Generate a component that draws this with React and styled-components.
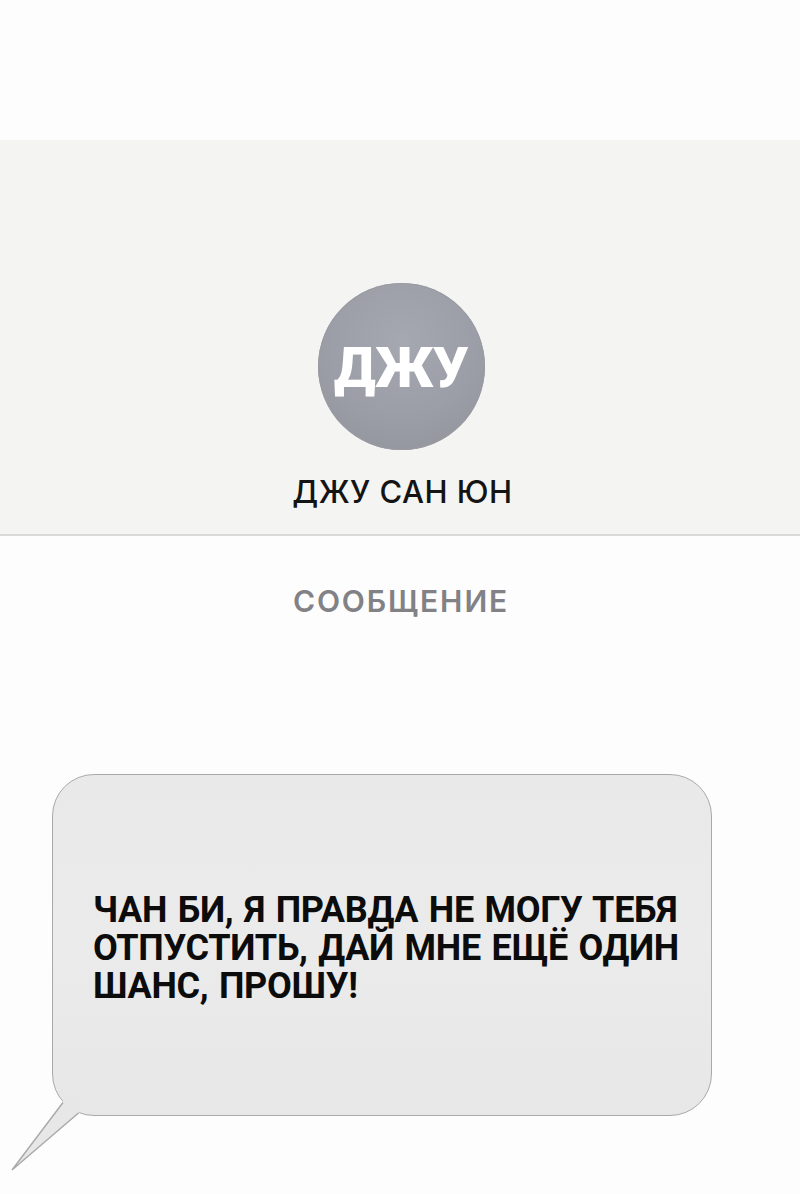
import React from "react";
import styled, { createGlobalStyle } from "styled-components";

const Global = createGlobalStyle`
  html, body { margin: 0; padding: 0; background: #fdfdfd; }
  body { font-family: Inter, "Open Sans", sans-serif; }
`;

const Page = styled.div`
  width: 800px;
  height: 1194px;
  overflow: hidden;
  display: flex;
  flex-direction: column;
  background: #fdfdfd;
`;

const TopSpace = styled.div`
  height: 140px;
`;

const Panel = styled.section`
  height: 396px;
  background: #f4f4f2;
  border-bottom: 2px solid #dadad8;
  display: flex;
  flex-direction: column;
  align-items: center;
  padding-top: 143px;
  box-sizing: border-box;
`;

const Avatar = styled.div`
  width: 167px;
  height: 167px;
  border-radius: 50%;
  background: radial-gradient(circle at 50% 35%, #a6a8b1 0%, #9c9ea7 55%, #90929a 100%);
  box-shadow: 0 0 0 1px #9a9ba2 inset;
  display: flex;
  align-items: center;
  justify-content: center;
  color: #ffffff;
  font-family: Roboto, Inter, sans-serif;
  font-weight: 900;
  font-size: 56px;
  letter-spacing: -0.5px;
  margin-left: 2px;
  padding-top: 2px;
  box-sizing: border-box;
`;

const Name = styled.div`
  margin-top: 23px;
  font-family: Inter, sans-serif;
  font-weight: 500;
  font-size: 31px;
  color: #141414;
  letter-spacing: 0.5px;
  margin-left: 5px;
`;

const Label = styled.div`
  margin-top: 47px;
  align-self: center;
  font-family: Inter, sans-serif;
  font-weight: 600;
  font-size: 30px;
  color: #818186;
  letter-spacing: 1.9px;
  margin-left: 2px;
`;

const BubbleWrap = styled.div`
  position: relative;
  margin-top: 155px;
  margin-left: 52px;
  width: 660px;
  height: 342px;
`;

const Bubble = styled.div`
  width: 100%;
  height: 100%;
  box-sizing: border-box;
  border: 1.5px solid #a9a9a9;
  border-radius: 42px;
  background: linear-gradient(180deg, #e9e9ea 0%, #ebebeb 50%, #e7e7e8 100%);
  display: flex;
  align-items: center;
  padding: 6px 0 0 40px;
`;

const Message = styled.p`
  margin: 0;
  font-family: Roboto, Inter, sans-serif;
  font-weight: 700;
  font-size: 36px;
  line-height: 38px;
  color: #0c0c0c;
  letter-spacing: -0.3px;
  word-spacing: 2px;
  white-space: nowrap;
`;

const Tail = styled.svg`
  position: absolute;
  left: -45px;
  top: 320px;
  overflow: visible;
`;

export default function App() {
  return (
    <Page>
      <Global />
      <TopSpace />
      <Panel>
        <Avatar>ДЖУ</Avatar>
        <Name>ДЖУ САН ЮН</Name>
      </Panel>
      <Label>СООБЩЕНИЕ</Label>
      <BubbleWrap>
        <Bubble>
          <Message>
            ЧАН БИ, Я ПРАВДА НЕ МОГУ ТЕБЯ
            <br />
            ОТПУСТИТЬ, ДАЙ МНЕ ЕЩЁ ОДИН
            <br />
            ШАНС, ПРОШУ!
          </Message>
        </Bubble>
        <Tail width="80" height="85" viewBox="0 0 80 85">
          <path d="M56 8 L5 76 L72 19 L72 0 L56 0 Z" fill="#e7e7e8" />
          <path
            d="M56 8.5 L5 76 L71.5 19"
            fill="none"
            stroke="#a9a9a9"
            strokeWidth="1.4"
            strokeLinejoin="miter"
          />
        </Tail>
      </BubbleWrap>
    </Page>
  );
}
